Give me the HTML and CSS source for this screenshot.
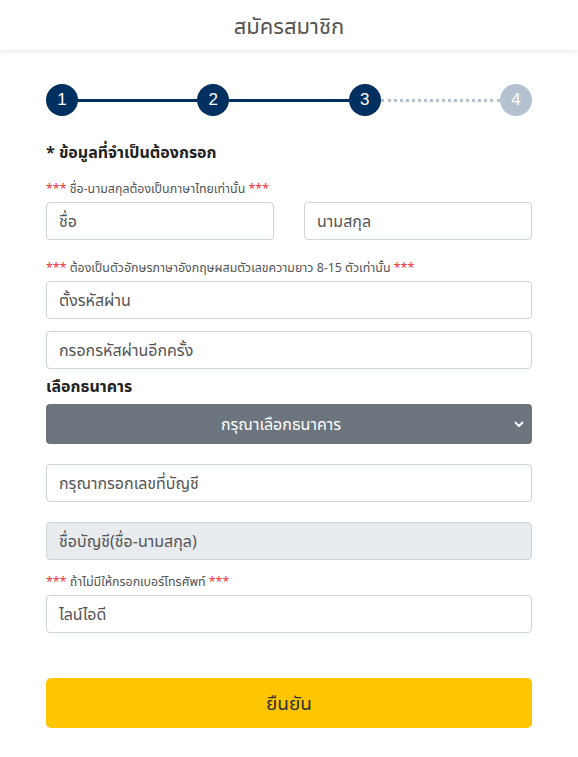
FILE: index.html
```html
<!DOCTYPE html>
<html lang="th">
<head>
  <meta charset="UTF-8">
  <meta name="viewport" content="width=device-width, initial-scale=1.0">
  <title>สมัครสมาชิก</title>
  <link rel="stylesheet" href="styles.css">
</head>
<body>
  <header class="topbar">
    <h1>สมัครสมาชิก</h1>
  </header>

  <div class="register">
    <div class="steps">
      <span class="step done">1</span>
      <span class="step-line"></span>
      <span class="step done">2</span>
      <span class="step-line"></span>
      <span class="step done">3</span>
      <span class="step-line todo"></span>
      <span class="step todo">4</span>
    </div>

    <form id="registerForm" onsubmit="event.preventDefault();">
      <h3 class="section-title">* ข้อมูลที่จำเป็นต้องกรอก</h3>

      <p class="note"><span class="star">***</span> ชื่อ-นามสกุลต้องเป็นภาษาไทยเท่านั้น <span class="star">***</span></p>
      <div class="row">
        <input type="text" class="field" placeholder="ชื่อ">
        <input type="text" class="field" placeholder="นามสกุล">
      </div>

      <p class="note"><span class="star">***</span> ต้องเป็นตัวอักษรภาษาอังกฤษผสมตัวเลขความยาว 8-15 ตัวเท่านั้น <span class="star">***</span></p>
      <input type="password" class="field" placeholder="ตั้งรหัสผ่าน">
      <input type="password" class="field gap-top" placeholder="กรอกรหัสผ่านอีกครั้ง">

      <label class="bank-label" for="bank">เลือกธนาคาร</label>
      <div class="select-wrap">
        <select id="bank" class="bank-select">
          <option value="">กรุณาเลือกธนาคาร</option>
          <option value="kbank">กสิกรไทย</option>
          <option value="scb">ไทยพาณิชย์</option>
          <option value="bbl">กรุงเทพ</option>
        </select>
        <svg class="chevron" width="10" height="7" viewBox="0 0 10 7"><path d="M1.5 1.5 5 5l3.5-3.5" fill="none" stroke="#fff" stroke-width="1.8" stroke-linecap="round" stroke-linejoin="round"/></svg>
      </div>

      <input type="text" class="field account" placeholder="กรุณากรอกเลขที่บัญชี">
      <input type="text" class="field disabled" placeholder="ชื่อบัญชี(ชื่อ-นามสกุล)" disabled>

      <p class="note"><span class="star">***</span> ถ้าไม่มีให้กรอกเบอร์โทรศัพท์ <span class="star">***</span></p>
      <input type="text" class="field" placeholder="ไลน์ไอดี">

      <button type="submit" class="submit-btn">ยืนยัน</button>
    </form>
  </div>
</body>
</html>
```

FILE: styles.css
```css
* {
  box-sizing: border-box;
}

body {
  margin: 0;
  background: #fff;
  font-family: "Noto Sans Thai UI", "Noto Sans Thai", "Noto Sans", "DejaVu Sans", sans-serif;
  color: #212529;
}

.topbar {
  height: 50px;
  display: flex;
  align-items: center;
  justify-content: center;
  background: #fff;
  box-shadow: 0 2px 4px rgba(0, 0, 0, 0.08);
}
.topbar h1 {
  margin: 0;
  font-size: 22px;
  line-height: 28px;
  font-weight: normal;
  color: #555;
}

.register {
  padding: 34px 46px 30px;
}

/* stepper */
.steps {
  display: flex;
  align-items: center;
}
.step {
  width: 32px;
  height: 32px;
  flex: none;
  border-radius: 50%;
  display: flex;
  align-items: center;
  justify-content: center;
  font-family: "Liberation Sans", Arial, sans-serif;
  font-size: 17px;
  color: #fff;
  background: #00305f;
}
.step.todo {
  background: #b4c1ce;
}
.step-line {
  flex: 1;
  height: 3px;
  background: #00305f;
}
.step-line.todo {
  height: 0;
  background: none;
  border-top: 3px dotted #b4c1ce;
}

.section-title {
  margin: 25px 0 17px;
  font-size: 16px;
  line-height: 22px;
  font-weight: bold;
  color: #222;
}

.note {
  margin: 0 0 5px;
  font-size: 12.4px;
  line-height: 17px;
  color: #555;
}
.star {
  color: #f0313b;
}

.row {
  display: grid;
  grid-template-columns: 1fr 1fr;
  gap: 30px;
}

.field {
  display: block;
  width: 100%;
  height: 38px;
  padding: 6px 12px;
  font-family: inherit;
  font-size: 16px;
  color: #495057;
  background: #fff;
  border: 1px solid #ced4da;
  border-radius: 4px;
}
.field::placeholder {
  color: #555;
}
.row + .note {
  margin-top: 19px;
}
.gap-top {
  margin-top: 12px;
}
.field.account {
  margin-top: 20px;
}
.field.disabled {
  margin-top: 20px;
  background: #e9ecef;
}
.field.disabled + .note {
  margin-top: 13px;
}

.bank-label {
  display: block;
  margin: 6px 0 7px;
  font-size: 16px;
  line-height: 22px;
  font-weight: bold;
  color: #222;
}
.select-wrap {
  position: relative;
}
.bank-select {
  display: block;
  width: 100%;
  height: 40px;
  padding: 0 28px 0 12px;
  font-family: inherit;
  font-size: 16px;
  text-align: center;
  text-align-last: center;
  color: #fff;
  background: #6c757d;
  border: none;
  border-radius: 4px;
  appearance: none;
  -webkit-appearance: none;
}
.chevron {
  position: absolute;
  right: 8px;
  top: 17px;
  pointer-events: none;
}

.submit-btn {
  display: block;
  width: 100%;
  height: 50px;
  margin-top: 45px;
  font-family: inherit;
  font-size: 19px;
  color: #333;
  background: #ffc500;
  border: none;
  border-radius: 5px;
  cursor: pointer;
}
```
